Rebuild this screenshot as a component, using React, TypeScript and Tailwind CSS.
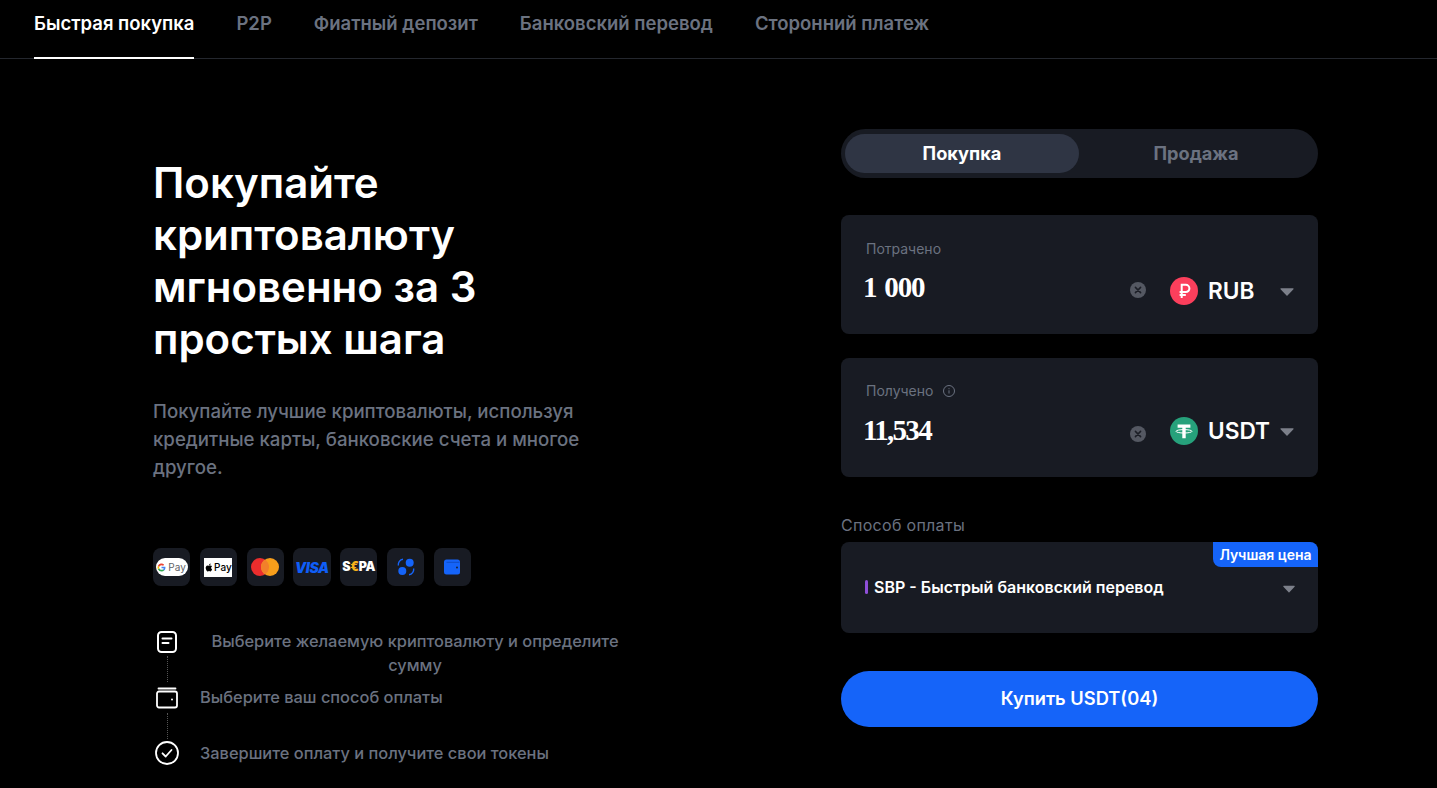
import React from "react";

const font = { fontFamily: "Inter, sans-serif" };

function Caret({ className = "" }: { className?: string }) {
  return (
    <svg width="14" height="9" viewBox="0 0 14 9" className={className}>
      <path d="M1 1.200h12a.6.6 0 0 1 .45 1L7.500 8.400a.7.7 0 0 1-1 0L.55 2.200a.6.6 0 0 1 .45-1z" fill="#7c808a" />
    </svg>
  );
}

function Clear() {
  return (
    <svg width="16" height="16" viewBox="0 0 16 16" className="shrink-0">
      <circle cx="8" cy="8" r="8" fill="#545862" />
      <path d="M5.400 5.400l5.200 5.200M10.600 5.400l-5.200 5.200" stroke="#1b1e26" strokeWidth="1.500" strokeLinecap="round" />
    </svg>
  );
}

function Rub() {
  return (
    <svg width="28" height="28" viewBox="0 0 28 28" className="shrink-0">
      <circle cx="14" cy="14" r="14" fill="#fb3f5c" />
      <path d="M11.700 21V7.800h4.100a3.600 3.600 0 0 1 0 7.200H9.600M9.600 18h6.200" fill="none" stroke="#fff" strokeWidth="2" />
    </svg>
  );
}

function Usdt() {
  return (
    <svg width="28" height="28" viewBox="0 0 28 28" className="shrink-0">
      <circle cx="14" cy="14" r="14" fill="#26a17b" />
      <path d="M7.600 7.600h12.800v3.200h-4.700v10.400h-3.400V10.800H7.600z" fill="#fff" />
      <ellipse cx="14" cy="14.300" rx="8" ry="1.700" fill="none" stroke="#fff" strokeWidth="1" />
    </svg>
  );
}

function Badge({ children }: { children: React.ReactNode }) {
  return <div className="w-[37.200px] h-[38px] rounded-lg bg-[#181b23] flex items-center justify-center overflow-hidden">{children}</div>;
}

function Pays() {
  return (
    <div className="flex gap-[9.600px] mt-[67px]">
      <Badge>
        <div className="w-[32px] h-[18px] rounded-full bg-white flex items-center justify-center gap-[2px]">
          <svg width="9" height="9" viewBox="0 0 16 16">
            <path d="M15 8.200c0-.5 0-1-.1-1.400H8v2.700h4a3.400 3.400 0 0 1-1.500 2.200l2.300 1.800C14.200 12.200 15 10.400 15 8.200z" fill="#4285f4" />
            <path d="M8 15c2 0 3.600-.6 4.800-1.800l-2.300-1.800c-.6.400-1.500.7-2.500.7a4.200 4.200 0 0 1-4-2.900L1.600 11A7 7 0 0 0 8 15z" fill="#34a853" />
            <path d="M4 9.200a4.200 4.200 0 0 1 0-2.400L1.600 5a7 7 0 0 0 0 6.100z" fill="#fbbc05" />
            <path d="M8 3.800c1.100 0 2 .4 2.800 1.100l2-2A7 7 0 0 0 1.600 5L4 6.800a4.200 4.200 0 0 1 4-3z" fill="#ea4335" />
          </svg>
          <span className="text-[10px] leading-none text-[#5f6368]">Pay</span>
        </div>
      </Badge>
      <Badge>
        <div className="w-[28px] h-[19px] bg-white flex items-center justify-center gap-[1px]">
          <svg width="8" height="9" viewBox="0 0 14 16">
            <path d="M11 8.500c0-1.700 1.400-2.500 1.500-2.600-.8-1.200-2.100-1.300-2.500-1.400-1.100-.1-2.100.6-2.600.6-.6 0-1.400-.6-2.300-.6C3.400 4.500 2.300 5.200 1.700 6.300.5 8.400 1.400 11.500 2.600 13.200c.6.800 1.300 1.800 2.200 1.700.9 0 1.200-.6 2.300-.6s1.400.6 2.300.6c1 0 1.600-.8 2.100-1.700.7-1 1-1.900 1-2-.1 0-2-.8-2-3zM9.200 3.300c.5-.6.800-1.400.7-2.300-.7 0-1.600.5-2.100 1.100-.5.500-.9 1.400-.8 2.200.8.100 1.700-.4 2.200-1z" fill="#000" />
          </svg>
          <span className="text-[10px] leading-none font-medium text-black">Pay</span>
        </div>
      </Badge>
      <Badge>
        <svg width="28" height="18" viewBox="0 0 28 18">
          <circle cx="9" cy="9" r="9" fill="#eb2d2d" />
          <circle cx="19" cy="9" r="9" fill="#f79e1b" />
          <path d="M14 1.500a9 9 0 0 1 0 15 9 9 0 0 1 0-15z" fill="#f2802a" />
        </svg>
      </Badge>
      <Badge>
        <span className="text-[14px] font-black italic text-[#0f5ef7] tracking-tight">VISA</span>
      </Badge>
      <Badge>
        <span className="text-[12.500px] font-black text-white leading-none tracking-tight">
          S<span className="text-[#f5b01a]">€</span>PA
        </span>
      </Badge>
      <Badge>
        <svg width="18" height="18" viewBox="0 0 18 18">
          <circle cx="12.700" cy="4.700" r="4" fill="#1564f9" />
          <circle cx="5.300" cy="12.900" r="4" fill="#1564f9" />
          <path d="M1.300 7.500c-.300-3 1.500-6 4.700-6.300M16.700 10.500c.300 3-1.500 6-4.700 6.300" fill="none" stroke="#1564f9" strokeWidth="1.400" />
        </svg>
      </Badge>
      <Badge>
        <svg width="18" height="18" viewBox="0 0 18 18">
          <rect x="1" y="1.500" width="16" height="15" rx="2.500" fill="#1564f9" />
          <path d="M3.500 4.300h13" stroke="#0e48b8" strokeWidth="0.800" />
          <circle cx="14" cy="9.500" r="0.900" fill="#181b23" />
        </svg>
      </Badge>
    </div>
  );
}

function Dots({ className = "" }: { className?: string }) {
  return <div className={`w-0 border-l border-dotted border-[#555] ${className}`} />;
}

function Steps() {
  return (
    <div className="mt-[43px] flex flex-col text-[16.400px] leading-[24px] text-[#6b7280] font-medium">
      <div className="flex items-start h-[56px]">
        <div className="w-[28px] flex flex-col items-center shrink-0 pt-[2px]">
          <svg width="20" height="22" viewBox="0 0 20 22" fill="none" stroke="#fff" strokeWidth="2">
            <rect x="1" y="1" width="18" height="20" rx="3.500" />
            <path d="M5.500 7.500h9M5.500 12h6" strokeLinecap="round" />
          </svg>
          <Dots className="h-[26px] mt-[3px]" />
        </div>
        <div className="ml-[19px] w-[430px] shrink-0 text-center">Выберите желаемую криптовалюту и определите сумму</div>
      </div>
      <div className="flex items-start h-[56px]">
        <div className="w-[28px] flex flex-col items-center shrink-0 pt-[2px]">
          <svg width="22" height="22" viewBox="0 0 22 22" fill="none" stroke="#fff" strokeWidth="1.800">
            <path d="M2.500 1.500h17" strokeLinecap="round" />
            <rect x="1" y="4.500" width="20" height="16" rx="2" />
            <circle cx="16" cy="12.500" r="1" fill="#fff" stroke="none" />
          </svg>
          <Dots className="h-[26px] mt-[4px]" />
        </div>
        <div className="ml-[19px]">Выберите ваш способ оплаты</div>
      </div>
      <div className="flex items-center">
        <div className="w-[28px] flex justify-center shrink-0">
          <svg width="24" height="24" viewBox="0 0 24 24" fill="none" stroke="#fff" strokeWidth="1.800">
            <circle cx="12" cy="12" r="11" />
            <path d="M7.500 12.300l3.200 3.200 5.800-6.500" strokeLinecap="round" strokeLinejoin="round" />
          </svg>
        </div>
        <div className="ml-[19px]">Завершите оплату и получите свои токены</div>
      </div>
    </div>
  );
}

type AmountProps = {
  label: string;
  value: string;
  coin: string;
  icon: React.ReactNode;
  info?: boolean;
  labelClass: string;
  valueClass: string;
  coinClass: string;
  clearClass: string;
};

function Amount({ label, value, coin, icon, info, labelClass, valueClass, coinClass, clearClass }: AmountProps) {
  return (
    <div className="h-[119px] rounded-lg bg-[#181b23] pl-[22px] pr-[24px] pt-[26px] flex flex-col">
      <div className={`flex items-center gap-[10px] pl-[3px] text-[14px] leading-[16px] text-[#6b7280] ${labelClass}`}>
        {label}
        {info && (
          <svg width="12" height="12" viewBox="0 0 12 12" fill="none" stroke="#6b7280" strokeWidth="1">
            <circle cx="6" cy="6" r="5.500" />
            <path d="M6 5.300v3.200M6 3.200v1" />
          </svg>
        )}
      </div>
      <div className="flex items-center mt-[13px] h-[36px]">
        <div className={`flex-1 text-[29px] font-bold text-white ${valueClass}`} style={{ fontFamily: "'Liberation Serif', serif" }}>
          {value}
        </div>
        <div className={`w-[40px] ${clearClass}`}><Clear /></div>
        <div className={`flex items-center ${coinClass}`}>
          {icon}
          <span className="ml-[10px] text-[22.700px] font-semibold text-white w-[72px] leading-[28px]">{coin}</span>
          <Caret />
        </div>
      </div>
    </div>
  );
}

export default function App() {
  const tabs = ["P2P", "Фиатный депозит", "Банковский перевод", "Сторонний платеж"];
  return (
    <div className="w-[1437px] h-[788px] bg-black overflow-hidden" style={font}>
      <div className="h-[59px] border-b border-[#24272e] pl-[34px] flex gap-[42px] text-[18.500px] font-semibold leading-[47px]">
        <div className="h-[59px] border-b-2 border-white text-white">Быстрая покупка</div>
        {tabs.map((t) => (
          <div key={t} className="text-[#6b7280]">{t}</div>
        ))}
      </div>
      <div className="flex pl-[153px]">
        <div className="w-[688px] pt-[98px]">
          <h1 className="text-[42px] leading-[52px] font-semibold text-white w-[400px]">Покупайте криптовалюту мгновенно за 3 простых шага</h1>
          <p className="mt-[32px] w-[450px] text-[18.650px] leading-[28px] text-[#6b7280] font-medium">Покупайте лучшие криптовалюты, используя кредитные карты, банковские счета и многое другое.</p>
          <Pays />
          <Steps />
        </div>
        <div className="w-[477px] pt-[70px]">
          <div className="h-[49px] rounded-full bg-[#181b23] pl-[4px] pr-[5px] py-[5px] flex text-[18.200px] font-bold">
            <div className="w-[234px] rounded-full bg-[#2f3544] text-white flex items-center justify-center">Покупка</div>
            <div className="flex-1 text-[#6b7280] flex items-center justify-center">Продажа</div>
          </div>
          <div className="mt-[37px] flex flex-col gap-[24px]">
            <Amount label="Потрачено" value="1 000" coin="RUB" icon={<Rub />} labelClass="" valueClass="tracking-[-1.200px] [word-spacing:2px]" coinClass="mt-[6px]" clearClass="mt-[4px]" />
            <Amount label="Получено" value="11,534" coin="USDT" icon={<Usdt />} info labelClass="-mt-[1px] mb-[1px]" valueClass="tracking-[-1.700px]" coinClass="" clearClass="mt-[5px]" />
          </div>
          <div className="mt-[39px] text-[16px] leading-[18px] text-[#6b7280] tracking-[0.3px]">Способ оплаты</div>
          <div className="relative mt-[8px] h-[91px] rounded-lg bg-[#181b23] pl-[24px] pr-[23px] pt-[36px] flex items-start justify-between">
            <div className="flex items-center text-[16px] leading-[18px] font-semibold text-white">
              <span className="w-[3px] h-[14px] rounded-sm bg-[#8e4fd8] mr-[6px]" />
              SBP - Быстрый банковский перевод
            </div>
            <svg width="12" height="8" viewBox="0 0 12 8" className="mt-[7px]">
              <path d="M.8.800h10.400a.5.5 0 0 1 .4.850L6.400 7.300a.6.6 0 0 1-.8 0L.4 1.650a.5.5 0 0 1 .4-.85z" fill="#7c808a" />
            </svg>
            <div className="absolute top-0 right-0 h-[25px] w-[105px] rounded-tr-lg rounded-bl-lg bg-[#1564f9] text-white text-[14px] font-semibold flex items-center justify-center">Лучшая цена</div>
          </div>
          <div className="mt-[38px] h-[56px] rounded-full bg-[#1564f9] text-white text-[18.300px] font-semibold flex items-center justify-center">Купить USDT(04)</div>
        </div>
      </div>
    </div>
  );
}
